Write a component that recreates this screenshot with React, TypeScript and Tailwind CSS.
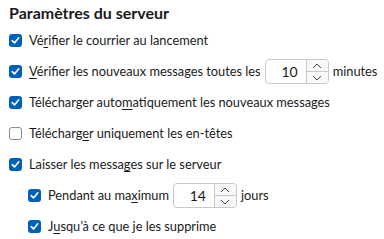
import React from 'react';

const font = { fontFamily: 'Lato, "Noto Sans", sans-serif' };

const Check: React.FC<{ checked?: boolean }> = ({ checked = true }) =>
  checked ? (
    <span className="flex h-[13px] w-[13px] shrink-0 items-center justify-center rounded-[3px] bg-[#005fb8]">
      <svg width="9" height="9" viewBox="0 0 9 9" fill="none">
        <path d="M1.2 4.6 L3.5 6.9 L7.8 1.8" stroke="white" strokeWidth="1.6" strokeLinecap="round" strokeLinejoin="round" />
      </svg>
    </span>
  ) : (
    <span className="h-[13px] w-[13px] shrink-0 rounded-[3px] border border-[#8a8a8a] bg-white" />
  );

const Spin: React.FC<{ value: number }> = ({ value }) => (
  <div className="flex h-[25px] overflow-hidden rounded-[4px] border border-[#c8c8c8] bg-white">
    <div className="flex w-[40px] items-center justify-end pr-[8px] text-[14px] text-[#1a1a1a]">{value}</div>
    <div className="flex w-[22px] flex-col border-l border-[#c8c8c8] bg-[#f9f9f9]">
      <div className="flex flex-1 items-center justify-center border-b border-[#c8c8c8]">
        <svg width="10" height="6" viewBox="0 0 10 6" fill="none">
          <path d="M1 5 L5 1 L9 5" stroke="#444" strokeWidth="1" />
        </svg>
      </div>
      <div className="flex flex-1 items-center justify-center">
        <svg width="10" height="6" viewBox="0 0 10 6" fill="none">
          <path d="M1 1 L5 5 L9 1" stroke="#444" strokeWidth="1" />
        </svg>
      </div>
    </div>
  </div>
);

const Row: React.FC<{ indent?: boolean; checked?: boolean; children: React.ReactNode }> = ({ indent, checked, children }) => (
  <div className={`flex h-[31px] items-center gap-[7px] ${indent ? 'pl-[28px]' : 'pl-[9px]'}`}>
    <Check checked={checked} />
    <div className="flex items-center gap-[4px] whitespace-nowrap">{children}</div>
  </div>
);

const U: React.FC<{ children: React.ReactNode }> = ({ children }) => (
  <span className="underline underline-offset-2">{children}</span>
);

export default function App() {
  return (
    <div className="h-[239px] w-[384px] overflow-hidden bg-white text-[12.8px] text-[#1a1a1a]" style={font}>
      <div className="flex h-[25px] items-center pl-[9px] text-[16px] font-bold">Paramètres du serveur</div>
      <Row>
        <span>Vé<U>r</U>ifier le courrier au lancement</span>
      </Row>
      <Row>
        <span><U>V</U>érifier les nouveaux messages toutes les</span>
        <Spin value={10} />
        <span>minutes</span>
      </Row>
      <Row>
        <span>Télécharger auto<U>m</U>atiquement les nouveaux messages</span>
      </Row>
      <Row checked={false}>
        <span>Télécharg<U>e</U>r uniquement les en-têtes</span>
      </Row>
      <Row>
        <span>Laisser les messa<U>g</U>es sur le serveur</span>
      </Row>
      <Row indent>
        <span>Pendant au ma<U>x</U>imum</span>
        <Spin value={14} />
        <span>jours</span>
      </Row>
      <Row indent>
        <span>J<U>u</U>squ’à ce que je les supprime</span>
      </Row>
    </div>
  );
}
